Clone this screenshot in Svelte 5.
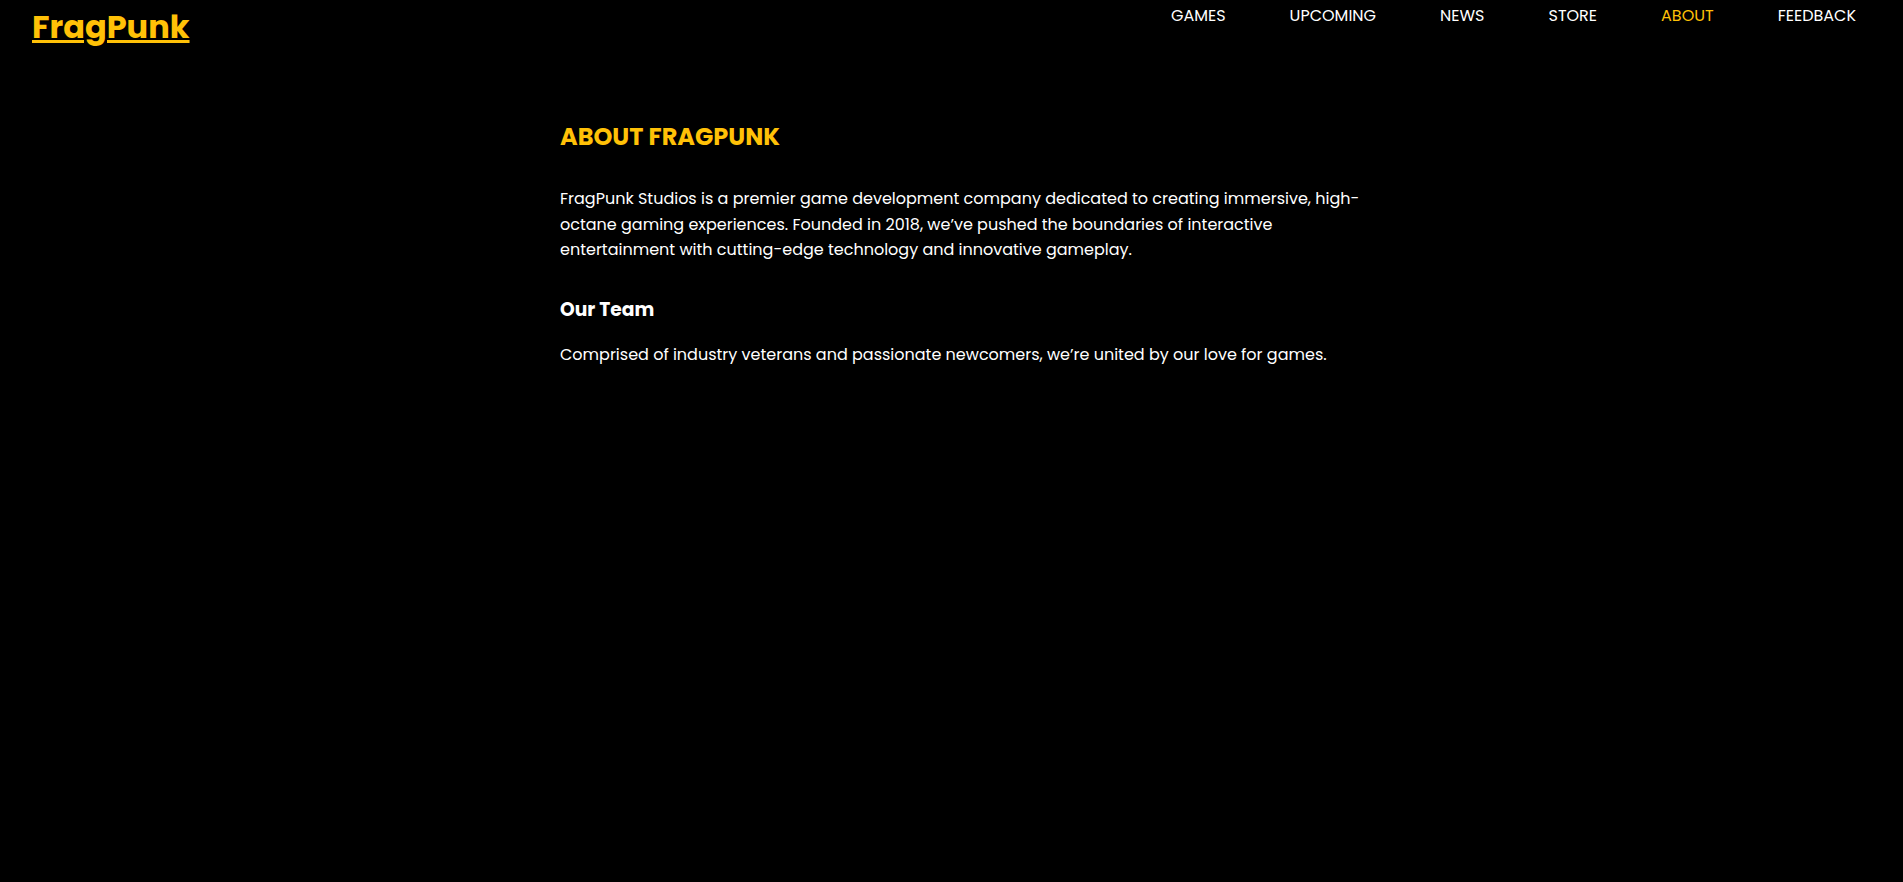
<script>
  const links = ['Games', 'Upcoming', 'News', 'Store', 'About', 'Feedback'];
  const current = 'About';
</script>

<header>
  <a class="brand" href="#home">FragPunk</a>
  <nav aria-label="Main">
    <ul>
      {#each links as link}
        <li>
          <a
            href={`#${link.toLowerCase()}`}
            class:active={link === current}
            aria-current={link === current ? 'page' : undefined}>{link.toUpperCase()}</a>
        </li>
      {/each}
    </ul>
  </nav>
</header>

<main>
  <article>
    <h2>ABOUT FRAGPUNK</h2>
    <p>
      FragPunk Studios is a premier game development company dedicated to creating immersive,
      high-octane gaming experiences. Founded in 2018, we’ve pushed the boundaries of interactive
      entertainment with cutting-edge technology and innovative gameplay.
    </p>
    <h3>Our Team</h3>
    <p>Comprised of industry veterans and passionate newcomers, we’re united by our love for games.</p>
  </article>
</main>

<style>
  :global(body) {
    background: #000;
    color: #fff;
    font-family: Poppins, Inter, sans-serif;
    font-size: 16px;
    line-height: 1.6;
  }

  header {
    display: flex;
    justify-content: space-between;
    align-items: flex-start;
    padding: 1px 47px 0 32px;
  }

  .brand {
    color: #ffc107;
    font-size: 32px;
    font-weight: 700;
    text-decoration: underline;
    text-decoration-thickness: 3px;
  }

  ul {
    display: flex;
    flex-wrap: wrap;
    gap: 64px;
    margin: 0;
    padding: 2px 0 0;
    list-style: none;
  }

  nav a {
    color: #fff;
    text-decoration: none;
  }

  nav a.active {
    color: #ffc107;
  }

  main {
    padding: 66px 0 64px 17px;
  }

  article {
    max-width: 800px;
    margin: 0 auto;
  }

  h2 {
    margin: 0 0 30px;
    color: #ffc107;
    line-height: 38px;
  }

  h3 {
    margin: 32px 0 17px;
  }

  p {
    margin: 0;
  }
</style>
